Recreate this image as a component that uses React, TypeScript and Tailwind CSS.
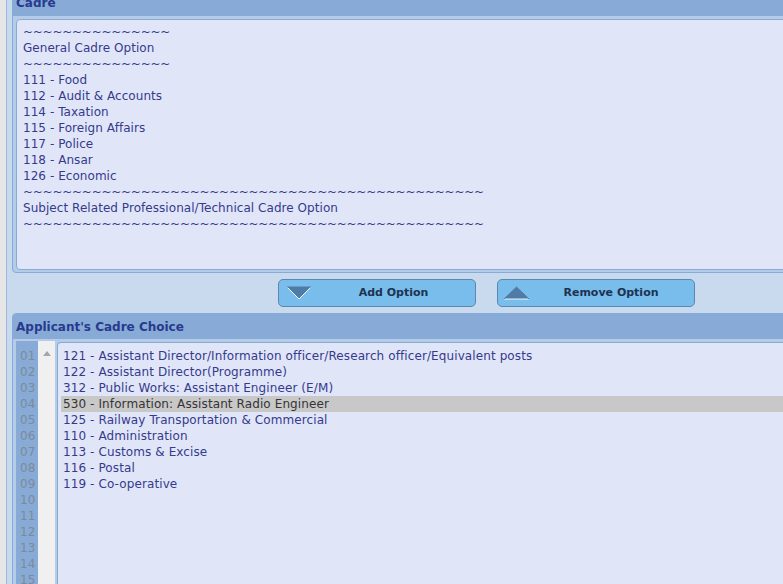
import React from "react";

const cadreLines = [
  "~~~~~~~~~~~~~~~",
  "General Cadre Option",
  "~~~~~~~~~~~~~~~",
  "111 - Food",
  "112 - Audit & Accounts",
  "114 - Taxation",
  "115 - Foreign Affairs",
  "117 - Police",
  "118 - Ansar",
  "126 - Economic",
  "~~~~~~~~~~~~~~~~~~~~~~~~~~~~~~~~~~~~~~~~~~~~~~~",
  "Subject Related Professional/Technical Cadre Option",
  "~~~~~~~~~~~~~~~~~~~~~~~~~~~~~~~~~~~~~~~~~~~~~~~",
];

const choices = [
  "121 - Assistant Director/Information officer/Research officer/Equivalent posts",
  "122 - Assistant Director(Programme)",
  "312 - Public Works: Assistant Engineer (E/M)",
  "530 - Information: Assistant Radio Engineer",
  "125 - Railway Transportation & Commercial",
  "110 - Administration",
  "113 - Customs & Excise",
  "116 - Postal",
  "119 - Co-operative",
];

const nums = ["01", "02", "03", "04", "05", "06", "07", "08", "09", "10", "11", "12", "13", "14", "15", "16"];

function DownTri() {
  return (
    <svg width="26" height="14" viewBox="0 0 26 14" className="shrink-0">
      <polygon points="1,1 25,1 13,13" fill="#4f7ca6" />
      <polyline points="25,1 13,13 1,1" fill="none" stroke="#ffffff" strokeWidth="1" opacity="0.9" />
      <polyline points="1,1 25,1" fill="none" stroke="#4f7ca6" strokeWidth="1" />
    </svg>
  );
}

function UpTri() {
  return (
    <svg width="27" height="14" viewBox="0 0 27 14" className="shrink-0">
      <polygon points="1,13 26,13 13.5,1" fill="#4f7ca6" />
      <polyline points="1,13 26,13" fill="none" stroke="#ffffff" strokeWidth="1" opacity="0.9" />
      <polyline points="1,13 13.5,1 26,13" fill="none" stroke="#4f7ca6" strokeWidth="1" />
    </svg>
  );
}

export default function App() {
  return (
    <div className="w-[783px] h-[584px] overflow-hidden bg-[#e6e6e6] flex font-['DejaVu_Sans',sans-serif] text-[12px]">
      <div className="ml-[6px] flex-1 min-w-0 border-l border-[#9dbadd] bg-[#c9daee] pl-[5px] flex flex-col">
        {/* Cadre panel */}
        <div className="-mt-[11px] w-[830px] shrink-0 border border-[#87abd6] rounded-[4px] bg-[#b5cce8] flex flex-col">
          <div className="h-[26px] bg-[#87abd6] rounded-t-[3px] pl-[3px] flex items-center font-bold text-[12px] text-[#283a8e]">
            Cadre
          </div>
          <div className="mx-[3px] mt-[3px] mb-[2px] h-[251px] border border-[#87abd6] rounded-[4px] bg-[#e0e6f8] pt-[4px] pl-[6px] text-[#363a8c] leading-[16px]">
            {cadreLines.map((l, i) => (
              <div key={i} className="h-[16px] whitespace-nowrap tracking-[0.05px]">
                {l.startsWith("~") ? <span className="tracking-[-0.25px]">{l}</span> : l}
              </div>
            ))}
          </div>
        </div>

        {/* Buttons */}
        <div className="h-[40px] shrink-0 flex items-start pt-[6px] pl-[266px] gap-[21px]">
          <button className="w-[198px] h-[28px] rounded-[5px] border border-[#5d88ad] bg-[#78bdec] flex items-center pl-[7px] pr-[2px] text-[#1d3350] font-bold text-[11px]">
            <DownTri />
            <span className="flex-1 text-center pl-[2px]">Add Option</span>
          </button>
          <button className="w-[198px] h-[28px] rounded-[5px] border border-[#5d88ad] bg-[#78bdec] flex items-center pl-[5px] pr-[2px] text-[#1d3350] font-bold text-[11px]">
            <UpTri />
            <span className="flex-1 text-center">Remove Option</span>
          </button>
        </div>

        {/* Applicant's choice panel */}
        <div className="w-[830px] flex-1 shrink-0 border border-[#87abd6] rounded-[4px] bg-[#b5cce8] flex flex-col">
          <div className="h-[25px] bg-[#87abd6] rounded-t-[3px] pl-[3px] flex items-center font-bold text-[12px] text-[#283a8e]">
            Applicant's Cadre Choice
          </div>
          <div className="flex flex-1 pl-[3px] pt-[2px]">
            <div className="w-[22px] bg-[#87abd6] pt-[7px] pl-[4px] text-[#7d8a99] leading-[16px]">
              {nums.map((n) => (
                <div key={n} className="h-[16px]">{n}</div>
              ))}
            </div>
            <div className="w-[17px] bg-[#f0f0f0] flex justify-center pt-[10px]">
              <svg width="8" height="5" viewBox="0 0 8 5">
                <polygon points="0,5 8,5 4,0" fill="#a6a6a6" />
              </svg>
            </div>
            <div className="ml-[2px] mt-[1px] flex-1 border-l border-t border-[#87abd6] rounded-tl-[4px] bg-[#e0e6f8] pt-[5px] pl-[3px] leading-[16px]">
              {choices.map((c, i) => (
                <div
                  key={i}
                  className={
                    i === 3
                      ? "h-[16px] pl-[2px] whitespace-nowrap tracking-[0.1px] bg-[#c8c8c8] text-[#343434]"
                      : "h-[16px] pl-[2px] whitespace-nowrap tracking-[0.1px] text-[#363a8c]"
                  }
                >
                  {c}
                </div>
              ))}
            </div>
          </div>
        </div>
      </div>
    </div>
  );
}
